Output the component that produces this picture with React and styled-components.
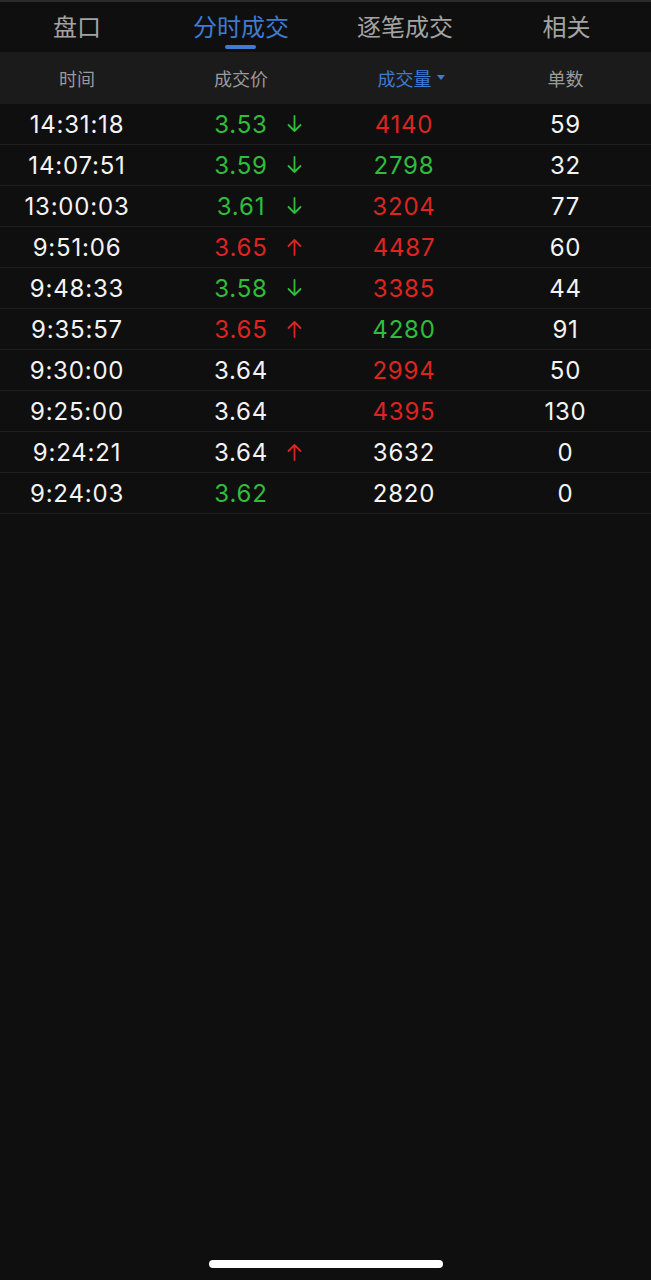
import React from "react";
import styled, { createGlobalStyle } from "styled-components";

const Global = createGlobalStyle`
  html, body { margin: 0; padding: 0; background: #0f0f0f; }
  body { font-family: Inter, "Noto Sans CJK SC", sans-serif; }
`;

const C = {
  bg: "#0f0f0f",
  header: "#1b1b1b",
  line: "#1f1f1f",
  blue: "#3d7cd2",
  gray: "#a3a3a3",
  white: "#f4f4f4",
  green: "#2fbd3b",
  red: "#dd2420",
};

const Page = styled.div`
  width: 651px;
  height: 1280px;
  display: flex;
  flex-direction: column;
  background: ${C.bg};
  border-top: 2px solid #2b2b2b;
  box-sizing: border-box;
  overflow: hidden;
`;

const TabBar = styled.nav`
  display: grid;
  grid-template-columns: 154px 174px 154px 1fr;
  height: 50px;
  flex-shrink: 0;
`;

const Tab = styled.div`
  position: relative;
  display: flex;
  align-items: center;
  justify-content: center;
  padding-bottom: 3px;
  font-family: "Noto Sans CJK SC", sans-serif;
  font-size: 24px;
  color: ${(p) => (p.$active ? C.blue : C.gray)};
  &::after {
    content: "";
    display: ${(p) => (p.$active ? "block" : "none")};
    position: absolute;
    bottom: 3px;
    left: 50%;
    margin-left: -16px;
    width: 31px;
    height: 4px;
    border-radius: 2px;
    background: ${C.blue};
  }
`;

const Grid = styled.div`
  display: grid;
  grid-template-columns: 154px 174px 152px 1fr;
  align-items: center;
  flex-shrink: 0;
`;

const HeadRow = styled(Grid)`
  height: 52px;
  background: ${C.header};
`;

const HeadCell = styled.div`
  display: flex;
  justify-content: center;
  align-items: center;
  padding-bottom: 1px;
  font-family: "Noto Sans CJK SC", sans-serif;
  font-size: 18px;
  color: ${(p) => (p.$active ? C.blue : "#9a9a9a")};
`;

const Caret = styled.span`
  width: 0;
  height: 0;
  margin-left: 5px;
  margin-right: -14px;
  border-left: 4.5px solid transparent;
  border-right: 4.5px solid transparent;
  border-top: 5px solid ${C.blue};
`;

const Row = styled(Grid)`
  height: 40px;
  border-bottom: 1px solid ${C.line};
`;

const Cell = styled.div`
  grid-row: 1;
  text-align: center;
  font-family: Inter, sans-serif;
  font-size: 24px;
  letter-spacing: 0.8px;
  color: ${(p) => (p.$c === "g" ? C.green : p.$c === "r" ? C.red : C.white)};
`;

const PriceCell = styled(Cell)`
  grid-column: 2;
`;

const ArrowBox = styled.div`
  grid-row: 1;
  grid-column: 2;
  justify-self: end;
  margin-right: 26px;
  display: flex;
  align-items: center;
`;

const HomeBar = styled.div`
  margin: auto auto 12px;
  width: 234px;
  height: 8px;
  border-radius: 4px;
  background: #ffffff;
  flex-shrink: 0;
`;

const Arrow = ({ dir, color }) => (
  <svg width="15" height="18" viewBox="0 0 15 18" fill="none">
    {dir === "up" ? (
      <path d="M7.5 2 V17 M1.5 8 L7.5 2 L13.5 8" stroke={color} strokeWidth="1.8" strokeLinecap="round" strokeLinejoin="round" />
    ) : (
      <path d="M7.5 1 V16 M1.5 10 L7.5 16 L13.5 10" stroke={color} strokeWidth="1.8" strokeLinecap="round" strokeLinejoin="round" />
    )}
  </svg>
);

const rows = [
  ["14:31:18", "3.53", "g", "down", "4140", "r", "59"],
  ["14:07:51", "3.59", "g", "down", "2798", "g", "32"],
  ["13:00:03", "3.61", "g", "down", "3204", "r", "77"],
  ["9:51:06", "3.65", "r", "up", "4487", "r", "60"],
  ["9:48:33", "3.58", "g", "down", "3385", "r", "44"],
  ["9:35:57", "3.65", "r", "up", "4280", "g", "91"],
  ["9:30:00", "3.64", "w", null, "2994", "r", "50"],
  ["9:25:00", "3.64", "w", null, "4395", "r", "130"],
  ["9:24:21", "3.64", "w", "up", "3632", "w", "0"],
  ["9:24:03", "3.62", "g", null, "2820", "w", "0"],
];

export default function App() {
  return (
    <Page>
      <Global />
      <TabBar>
        <Tab>盘口</Tab>
        <Tab $active>分时成交</Tab>
        <Tab>逐笔成交</Tab>
        <Tab>相关</Tab>
      </TabBar>
      <HeadRow>
        <HeadCell>时间</HeadCell>
        <HeadCell>成交价</HeadCell>
        <HeadCell $active>
          成交量
          <Caret />
        </HeadCell>
        <HeadCell>单数</HeadCell>
      </HeadRow>
      {rows.map(([t, p, pc, dir, v, vc, n], i) => (
        <Row key={i}>
          <Cell>{t}</Cell>
          <PriceCell $c={pc}>{p}</PriceCell>
          {dir && (
            <ArrowBox>
              <Arrow dir={dir} color={dir === "up" ? C.red : C.green} />
            </ArrowBox>
          )}
          <Cell $c={vc}>{v}</Cell>
          <Cell>{n}</Cell>
        </Row>
      ))}
      <HomeBar />
    </Page>
  );
}
